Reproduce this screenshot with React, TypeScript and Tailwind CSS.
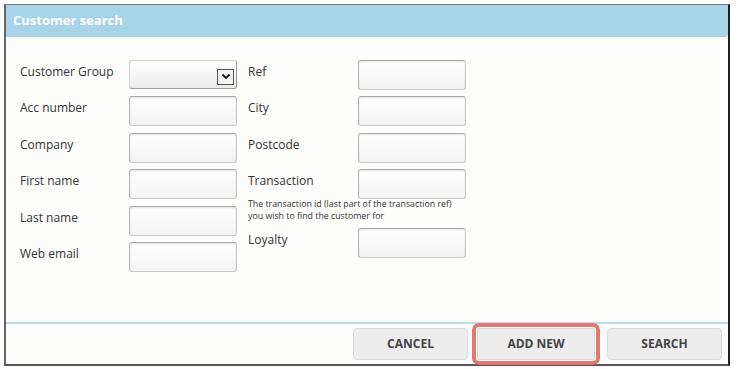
const LEFT = ["Acc number", "Company", "First name", "Last name", "Web email"];
const RIGHT_TOP = ["Ref", "City", "Postcode", "Transaction"];

const inputCls =
  "h-[30px] w-[108px] rounded-[3px] border border-[#c9c9c9] border-t-[#a8a8a8] border-l-[#b5b5b5] bg-gradient-to-b from-[#ffffff] to-[#f3f3f3] shadow-[inset_0_1px_2px_rgba(0,0,0,0.12)]";

function Row({ label, children, last, wide }: { label: string; children: React.ReactNode; last?: boolean; wide?: boolean }) {
  return (
    <div className={`flex h-[30px] items-start ${last ? "" : "mb-[6.5px]"}`}>
      <span className={`${wide ? "w-[110px]" : "w-[109px]"} pt-[4px] text-[12px] leading-[16px] text-[#333]`}>{label}</span>
      {children}
    </div>
  );
}

export default function App() {
  return (
    <div className="bg-white p-[4px]" style={{ fontFamily: '"Open Sans", "Noto Sans", sans-serif' }}>
      <div className="flex h-[362px] w-[726px] flex-col border-t border-l-2 border-r-2 border-b-2 border-t-[#7a7a7a] border-l-[#666] border-r-[#1e1e1e] border-b-[#555] bg-[#fdfdfc]">
        {/* Header */}
        <div className="flex h-[32px] items-center rounded-br-[3px] bg-[#a8d4ea] pl-[7px]">
          <h1 className="text-[13px] font-bold text-white">Customer search</h1>
        </div>

        {/* Form */}
        <div className="flex flex-1 pl-[14px] pt-[22.5px]">
          <div className="flex flex-col">
            <Row label="Customer Group">
              <div className="relative flex h-[29px] w-[108px] items-end justify-end rounded-[3px] border border-[#d2d2d2] border-b-[#9a9a9a] border-r-[#9a9a9a] bg-gradient-to-b from-[#ffffff] to-[#ebebeb] pb-[3px] pr-[2px]">
                <span className="flex h-[16px] w-[17px] items-center justify-center border border-[#555] bg-[#f4f4f4]">
                  <svg width="10" height="7" viewBox="0 0 10 7">
                    <path d="M1.5 1.5 L5 5 L8.5 1.5" fill="none" stroke="#111" strokeWidth="1.8" />
                  </svg>
                </span>
              </div>
            </Row>
            {LEFT.map((l, i) => (
              <Row key={l} label={l} last={i === LEFT.length - 1}>
                <div className={inputCls} />
              </Row>
            ))}
          </div>

          <div className="ml-[11px] flex flex-col">
            {RIGHT_TOP.map((l, i) => (
              <Row key={l} label={l} wide last={i === RIGHT_TOP.length - 1}>
                <div className={`${inputCls} w-[107px]`} />
              </Row>
            ))}
            <p className="text-[8.8px] leading-[11.5px] text-[#333]">
              The transaction id (last part of the transaction ref)
              <br />
              you wish to find the customer for
            </p>
            <div className="mt-[6px]">
              <Row label="Loyalty" wide last>
                <div className={`${inputCls} w-[107px]`} />
              </Row>
            </div>
          </div>
        </div>

        {/* Footer */}
        <div className="flex justify-end border-t-2 border-[#bcd8ee] pb-[4px] pr-[6px] pt-[4px]">
          <button className="h-[32px] w-[115px] rounded-[4px] border border-[#dcdcdc] bg-[#eeeded] text-[12px] font-bold text-[#444]">
            CANCEL
          </button>
          <button className="ml-[9px] h-[32px] w-[118px] rounded-[2px] border border-[#dcdcdc] bg-[#eeeded] text-[12px] font-bold text-[#444] outline-4 outline-offset-1 outline-[#e07a6e]">
            ADD NEW
          </button>
          <button className="ml-[12px] h-[32px] w-[115px] rounded-[4px] border border-[#dcdcdc] bg-[#eeeded] text-[12px] font-bold text-[#444]">
            SEARCH
          </button>
        </div>
      </div>
    </div>
  );
}
